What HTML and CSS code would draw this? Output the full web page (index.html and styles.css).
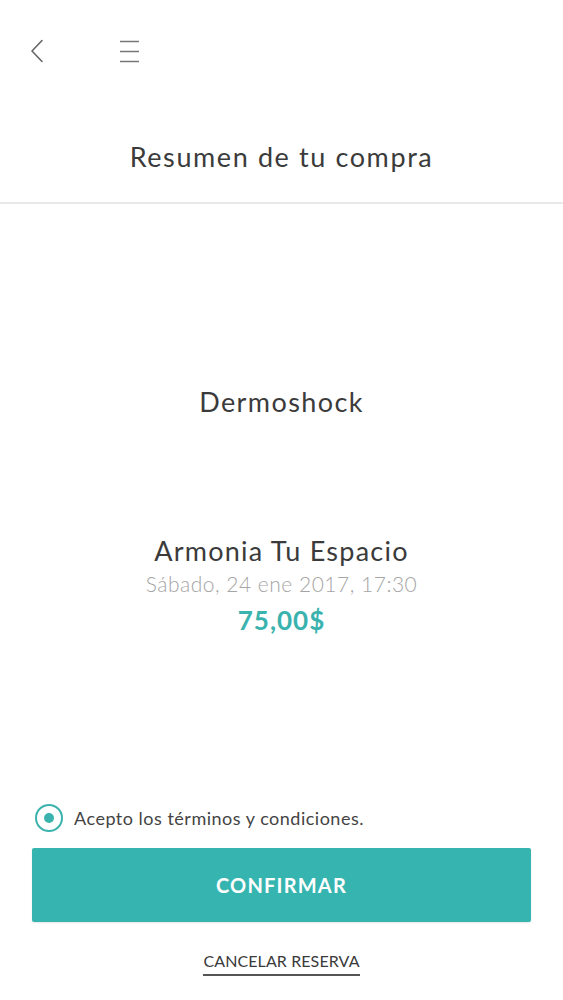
FILE: index.html
```html
<!DOCTYPE html>
<html lang="es">
<head>
<meta charset="utf-8">
<title>Resumen de tu compra</title>
<link rel="stylesheet" href="styles.css">
</head>
<body>
<div class="page">
  <header class="topbar">
    <svg class="icon back" width="14" height="24" viewBox="0 0 14 24"><path d="M12 1.5 L2 12 L12 22.5" fill="none" stroke="#666" stroke-width="1.6" stroke-linecap="round" stroke-linejoin="round"/></svg>
    <svg class="icon menu" width="21" height="23" viewBox="0 0 21 23"><path d="M1 1.5H20M1 11.5H20M1 21.5H20" fill="none" stroke="#777" stroke-width="1.6"/></svg>
  </header>
  <h1 class="title">Resumen de tu compra</h1>
  <main class="summary">
    <div class="service">Dermoshock</div>
    <div class="venue">Armonia Tu Espacio</div>
    <div class="date">Sábado, 24 ene 2017, 17:30</div>
    <div class="price">75,00$</div>
  </main>
  <label class="terms">
    <span class="radio"><span class="dot"></span></span>
    <span class="terms-text">Acepto los términos y condiciones.</span>
  </label>
  <button class="confirm">CONFIRMAR</button>
  <div class="cancel-wrap"><a class="cancel">CANCELAR RESERVA</a></div>
</div>
</body>
</html>
```
FILE: styles.css
```css
html, body {
  margin: 0;
  padding: 0;
  background: #fff;
}
body {
  font-family: "Lato", "Open Sans", sans-serif;
  color: #3a3a3a;
}
.page {
  width: 563px;
  display: flex;
  flex-direction: column;
}
.topbar {
  height: 100px;
  display: flex;
  align-items: center;
  padding-left: 30px;
  gap: 75px;
  box-sizing: border-box;
  padding-top: 2px;
}
.icon { display: block; }
.title {
  margin: 0;
  padding: 42px 0 30px;
  line-height: 30px;
  font-size: 27px;
  font-weight: 400;
  text-align: center;
  color: #3b3b3b;
  border-bottom: 2px solid #e9e9e9;
  letter-spacing: 1.6px;
}
.summary {
  display: flex;
  flex-direction: column;
  align-items: center;
  text-align: center;
}
.service {
  margin-top: 183px;
  font-size: 27px;
  line-height: 30px;
  color: #3b3b3b;
  letter-spacing: 1.4px;
}
.venue {
  margin-top: 119px;
  font-size: 27px;
  line-height: 30px;
  color: #3b3b3b;
  letter-spacing: 1.25px;
}
.date {
  margin-top: 5px;
  font-size: 21px;
  line-height: 26px;
  color: #a5a5a5;
  font-weight: 300;
  letter-spacing: 0.5px;
}
.price {
  margin-top: 8px;
  font-size: 26px;
  line-height: 30px;
  font-weight: 700;
  color: #3ab3ae;
  letter-spacing: 1px;
}
.terms {
  margin: 169px 0 0 35px;
  display: flex;
  align-items: center;
  gap: 11px;
  height: 28px;
}
.radio {
  width: 24px;
  height: 24px;
  border: 2px solid #3ab3ae;
  border-radius: 50%;
  display: flex;
  align-items: center;
  justify-content: center;
}
.dot {
  width: 10px;
  height: 10px;
  border-radius: 50%;
  background: #3ab3ae;
}
.terms-text {
  font-size: 18px;
  color: #444;
  letter-spacing: 0.5px;
}
.confirm {
  margin: 16px 32px 0;
  height: 74px;
  border: 0;
  border-radius: 2px;
  background: #36b5b0;
  color: #fff;
  font-family: "Lato", "Open Sans", sans-serif;
  font-weight: 700;
  font-size: 20px;
  letter-spacing: 1.2px;
  box-shadow: 0 1px 2px rgba(0,0,0,0.1);
}
.cancel-wrap {
  margin-top: 29px;
  text-align: center;
  line-height: 20px;
}
.cancel {
  display: inline-block;
  font-size: 16px;
  line-height: 20px;
  color: #3a3a3a;
  text-decoration: none;
  border-bottom: 2px solid #555;
  padding-bottom: 3px;
  letter-spacing: 0.1px;
}
```
